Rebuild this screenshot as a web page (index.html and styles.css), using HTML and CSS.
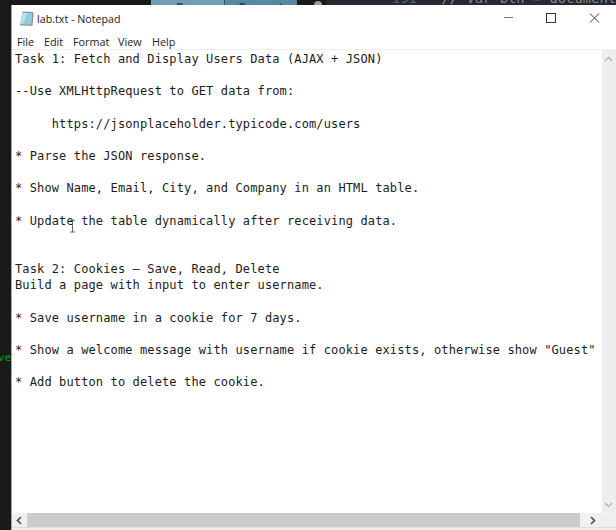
FILE: index.html
```html
<!DOCTYPE html>
<html lang="en">
<head>
<meta charset="utf-8">
<title>lab.txt - Notepad</title>
<link rel="stylesheet" href="styles.css">
</head>
<body>
<div class="desktop">
  <div class="behind-top">
    <span class="tab tab-a">B</span><span class="tab tab-b">Request</span>
    <span class="dot"></span>
    <code class="editor"><span class="line-no">191</span><span class="code-text">// var btn = document</span></code>
  </div>
  <span class="behind-left">ver</span>
  <main class="window">
    <header class="titlebar">
      <svg class="app-icon" width="16" height="16" viewBox="0 0 16 16">
        <path d="M4 1.5 14.4 2 13.6 14.6 1.5 14Z" fill="#c5b89a"/>
        <path d="M3.5 1 14 1.5 12.2 13.8 1 13.2Z" fill="#8fcbdb"/>
        <path d="M3.5 1 9 1.3 4 13.4 1 13.2Z" fill="#b4e0ea"/>
        <path d="M3.5 1 14 1.5" stroke="#71858a" stroke-width="1"/>
        <path d="M14.1 2 12.9 14.3 1 13.8" fill="none" stroke="#7d8278" stroke-width=".9"/>
      </svg>
      <h1 class="title">lab.txt - Notepad</h1>
      <svg class="controls" width="98" height="12" viewBox="0 0 98 12" fill="none">
        <path d="M1 5.5H10" stroke="#777"/>
        <rect x="43.5" y="1.5" width="9" height="9" stroke="#333"/>
        <path d="M87 1.5 96 10.5M96 1.5 87 10.5" stroke="#333"/>
      </svg>
    </header>
    <nav class="menu">
      <span class="m-file">File</span><span class="m-edit">Edit</span><span class="m-format">Format</span><span class="m-view">View</span><span class="m-help">Help</span>
    </nav>
    <div class="body">
      <pre class="text">Task 1: Fetch and Display Users Data (AJAX + JSON)

--Use XMLHttpRequest to GET data from:

     https://jsonplaceholder.typicode.com/users

* Parse the JSON response.

* Show Name, Email, City, and Company in an HTML table.

* Update the table dynamically after receiving data.


Task 2: Cookies – Save, Read, Delete
Build a page with input to enter username.

* Save username in a cookie for 7 days.

* Show a welcome message with username if cookie exists, otherwise show "Guest"

* Add button to delete the cookie.</pre>
      <div class="vscroll">
        <svg width="9" height="6" viewBox="0 0 9 6"><path d="M1 5 4.5 1.5 8 5"/></svg>
        <svg width="9" height="6" viewBox="0 0 9 6"><path d="M1 1 4.5 4.5 8 1"/></svg>
      </div>
    </div>
    <div class="hscroll">
      <svg width="6" height="9" viewBox="0 0 6 9"><path d="M5 1 1.5 4.5 5 8"/></svg>
      <div class="thumb"></div>
      <svg width="6" height="9" viewBox="0 0 6 9"><path d="M1 1 4.5 4.5 1 8"/></svg>
    </div>
    <div class="status"></div>
  </main>
  <svg class="caret" width="7" height="13" viewBox="0 0 7 13"><path d="M1 .5H6M3.5 .5V12M1 12H6" fill="none" stroke="#666"/></svg>
</div>
</body>
</html>
```
FILE: styles.css
```css
body { margin: 0; }
.desktop {
  position: relative;
  display: grid;
  grid-template: 5px 525px / 11px 605px;
  width: 616px;
  height: 530px;
  overflow: hidden;
  background: #191919;
}
.behind-top {
  grid-column: 1 / 3;
  display: flex;
  height: 5px;
  overflow: hidden;
  padding-left: 151px;
}
.tab {
  box-sizing: border-box;
  flex: none;
  height: 5px;
  font: bold 11px/12px "Open Sans", sans-serif;
  color: #263d49;
  text-align: center;
  padding-top: 1px;
}
.tab-a { width: 73px; background: #6f9eb6; padding-right: 15px; }
.tab-b { width: 73px; background: #5788a3; border-left: 1px solid #385768; }
.dot {
  flex: none;
  width: 8px;
  height: 8px;
  margin: 1px 0 0 17px;
  border-radius: 50%;
  background: #9a9a9a;
}
.editor {
  flex: none;
  display: flex;
  width: 290px;
  height: 5px;
  margin-left: 4px;
  background: #252a33;
  font: 13.8px/16px "DejaVu Sans Mono", monospace;
  white-space: pre;
}
.line-no { width: 53px; padding-left: 66px; margin-top: -10px; color: #59606b; }
.code-text { margin-top: -10px; color: #7f8792; }
.behind-left {
  align-self: start;
  width: 11px;
  margin-top: 346px;
  overflow: hidden;
  font: 11px/13px "DejaVu Sans Mono", monospace;
  color: #169916;
  text-indent: -2px;
}
.window {
  box-sizing: border-box;
  display: flex;
  flex-direction: column;
  height: 525px;
  background: #fff;
  border-left: 1px solid #a8a8a8;
  font-family: "Open Sans", sans-serif;
  color: #222;
}
.titlebar {
  display: flex;
  align-items: flex-start;
  height: 28px;
}
.app-icon { margin: 6px 0 0 7px; }
.title {
  flex: 1;
  margin: 6px 0 0 2px;
  font: 400 10.7px/16px "Open Sans", sans-serif;
  white-space: nowrap;
}
.controls { margin: 7px 15px 0 0; }
.menu {
  display: flex;
  height: 16px;
  padding-left: 5px;
  border-bottom: 1px solid #eee;
  font-size: 10.8px;
  line-height: 17px;
}
.m-file { width: 27px; }
.m-edit { width: 29px; }
.m-format { width: 45px; }
.m-view { width: 34px; }
.body { display: flex; height: 463px; }
.text {
  flex: 1;
  margin: 0;
  padding: 1px 0 0 3px;
  font: 12px/16.17px "DejaVu Sans Mono", monospace;
  letter-spacing: .125px;
  color: #1c1c1c;
  overflow: hidden;
}
.vscroll {
  box-sizing: border-box;
  display: flex;
  flex-direction: column;
  align-items: center;
  justify-content: space-between;
  width: 14px;
  padding: 6px 1px 5px 0;
  background: #eee;
}
.vscroll path { fill: none; stroke: #b5b5b5; stroke-width: 1.5; }
.hscroll {
  display: flex;
  align-items: center;
  height: 14px;
  padding: 0 20px 0 4px;
  background: #f0f0f0;
}
.hscroll path { fill: none; stroke: #505050; stroke-width: 1.7; }
.thumb {
  flex: 1;
  height: 14px;
  margin: 0 10px 0 5px;
  background: #cbcbcb;
}
.status { flex: 1; border-top: 1px solid #ddd; background: #f0f0f0; }
.caret { position: absolute; left: 69px; top: 220px; }
```
